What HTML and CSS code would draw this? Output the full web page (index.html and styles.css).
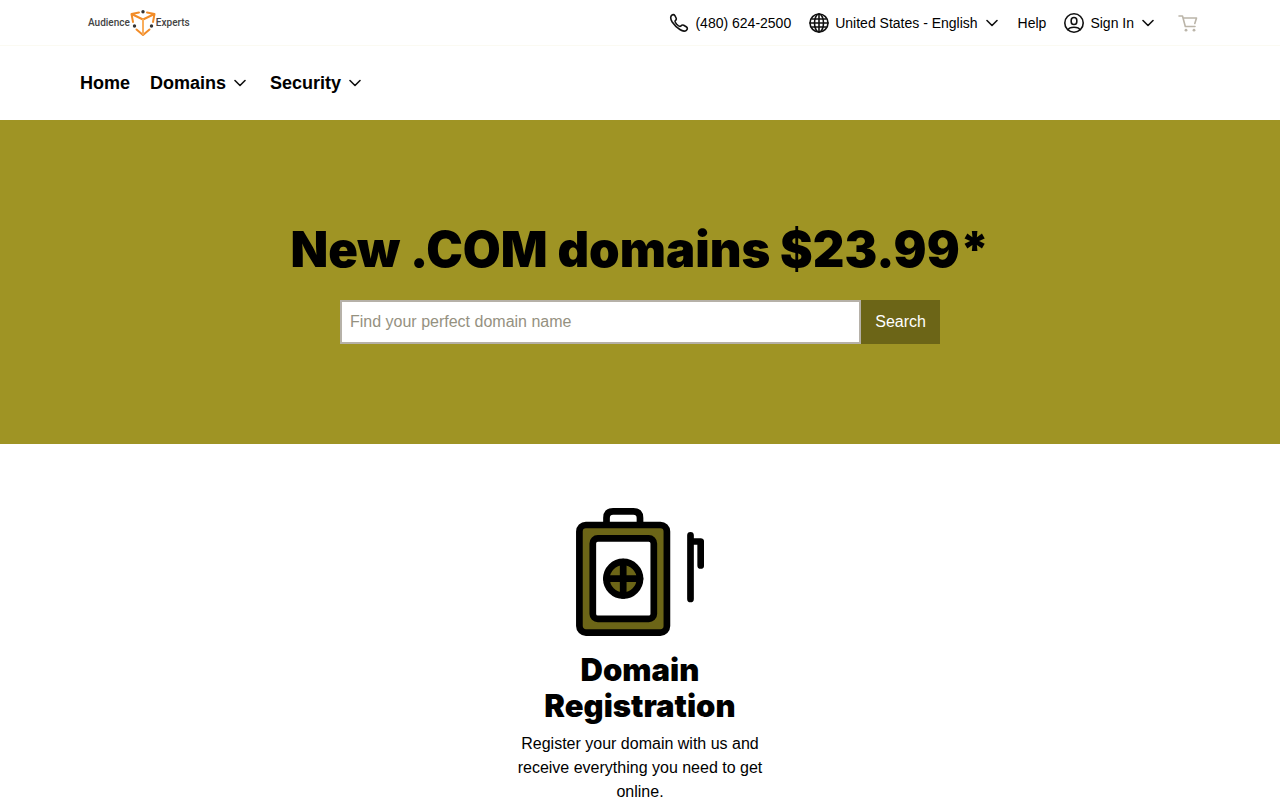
FILE: index.html
```html
<!DOCTYPE html>
<html lang="en">
<head>
<meta charset="utf-8">
<meta name="viewport" content="width=device-width, initial-scale=1">
<title>Audience Experts</title>
<link rel="stylesheet" href="styles.css">
</head>
<body>
<header>
  <div class="topbar">
    <a class="logo" href="#" aria-label="Audience Experts">
      <span>Audience</span>
      <svg class="logo-mark" viewBox="0 0 26 28" aria-hidden="true">
        <g fill="none" stroke="#f28c28" stroke-width="2" stroke-linejoin="round" stroke-linecap="round">
          <path d="M9 3.500 1.500 5 13 10.500 24.500 5 17 3.500M1.500 5 3 13M24.500 5 23 13M6.500 20.500 13 26 19.500 20.500"/>
          <path stroke="#f9ad5c" d="M13 10.500V25"/>
        </g>
        <g fill="#333"><circle cx="13" cy="2.700" r="1.700"/><circle cx="4.500" cy="17" r="1.700"/><circle cx="21.500" cy="17" r="1.700"/></g>
      </svg>
      <span>Experts</span>
    </a>
    <nav class="utility" aria-label="Utility">
      <a class="item" href="tel:4806242500">
        <svg class="icon" viewBox="0 0 20 20" aria-hidden="true"><path d="M2.300 2.800C3.200 1.400 5 1.200 5.900 2.700L7.100 5c.7 1.400 0 2-.9 2.800-.6.700 0 1.700 1.500 3.400 1.700 1.800 3.200 2.600 4 1.900.9-.9 1.700-1.500 3-.8l2.500 1.500c1.600 1 1.400 2.600.2 3.500-1.600 1.300-3.900 1-6.500-.8A26 26 0 0 1 3.200 9C1.500 6.300 1.200 4.500 2.300 2.800Z"/></svg>
        <span>(480) 624-2500</span>
      </a>
      <button class="item" type="button">
        <svg class="icon globe" viewBox="0 0 20 20" aria-hidden="true"><circle cx="10" cy="10" r="9"/><ellipse cx="10" cy="10" rx="4.500" ry="9"/><path d="M10 1v18M1 10h18M3 6h14M3 14h14"/></svg>
        <span>United States - English</span>
        <svg class="chevron" viewBox="0 0 12 12" aria-hidden="true"><path d="m1 3.500 5 5 5-5"/></svg>
      </button>
      <a class="item" href="#">Help</a>
      <button class="item" type="button">
        <svg class="icon" viewBox="0 0 20 20" aria-hidden="true"><circle cx="10" cy="10" r="9.200"/><rect x="7.200" y="4.500" width="5.600" height="7" rx="2.800"/><path d="M4 16.800C5.500 13.300 14.500 13.300 16 16.800"/></svg>
        <span>Sign In</span>
        <svg class="chevron" viewBox="0 0 12 12" aria-hidden="true"><path d="m1 3.500 5 5 5-5"/></svg>
      </button>
      <a class="item cart" href="#" aria-label="Cart">
        <svg class="icon" viewBox="0 0 20 20" aria-hidden="true"><path d="M1 3h3.500L7.300 13.500h9.700M5 5h13.500L16.800 10.500"/><circle class="wheel" cx="8" cy="17.200" r="1.400"/><circle class="wheel" cx="16" cy="17.200" r="1.400"/></svg>
      </a>
    </nav>
  </div>
  <nav class="mainnav" aria-label="Main">
    <a href="#">Home</a>
    <button type="button">Domains <svg class="chevron" viewBox="0 0 12 12" aria-hidden="true"><path d="m1 3.500 5 5 5-5"/></svg></button>
    <button type="button">Security <svg class="chevron" viewBox="0 0 12 12" aria-hidden="true"><path d="m1 3.500 5 5 5-5"/></svg></button>
  </nav>
</header>
<main>
  <section class="hero">
    <h1>New .COM domains $23.99*</h1>
    <form class="search">
      <input type="text" placeholder="Find your perfect domain name" aria-label="Find your perfect domain name">
      <button type="submit">Search</button>
    </form>
  </section>
  <section class="feature">
    <svg class="feature-icon" viewBox="0 0 128 128" aria-hidden="true">
      <g stroke="#000" stroke-width="6.700" fill="none" stroke-linecap="round" stroke-linejoin="round">
        <path stroke-linecap="butt" d="M30.500 16v-6q0-6.600 6.600-6.600h20.300q6.600 0 6.600 6.600v6"/>
        <rect x="3.400" y="17" width="87.500" height="107.600" rx="6.500" fill="#6c6517"/>
        <rect x="16.800" y="30.400" width="61" height="80.500" rx="5" fill="#fff"/>
        <circle cx="47.200" cy="70.700" r="16.800" fill="#6c6517"/>
        <path d="M47.200 54v33.500M30.500 70.700H64M114.500 27.300V91M114.500 33.500h10.200v24"/>
      </g>
    </svg>
    <h2>Domain Registration</h2>
    <p>Register your domain with us and receive everything you need to get online.</p>
  </section>
</main>
</body>
</html>
```

FILE: styles.css
```css
* { box-sizing: border-box; }
body {
  margin: 0;
  background: #fff;
  color: #000;
  font: 16px/24px "Liberation Sans", Arial, sans-serif;
}
a, button {
  color: inherit;
  font: inherit;
  text-decoration: none;
}
button {
  padding: 0;
  border: 0;
  background: none;
  cursor: pointer;
}
h1, h2, p { margin: 0; }
h1, h2 { font-family: "Arial Black", Inter, sans-serif; font-weight: 900; }

.topbar {
  display: flex;
  align-items: center;
  justify-content: space-between;
  min-height: 46px;
  padding: 0 80px 0 88px;
  border-bottom: 1px solid #fbfaf2;
}
.logo {
  display: flex;
  align-items: center;
  color: #444;
  font: 500 10px/20px Roboto, "Liberation Sans", sans-serif;
}
.logo-mark { width: 26px; height: 28px; }
.utility {
  display: flex;
  align-items: center;
  gap: 18px;
  font-size: 14px;
}
.item { display: flex; align-items: center; gap: 6px; }
.icon, .chevron {
  flex: none;
  fill: none;
  stroke: #111;
  stroke-width: 1.6;
  stroke-linecap: round;
  stroke-linejoin: round;
}
.icon { width: 20px; height: 20px; }
.chevron { width: 12px; height: 12px; margin: 0 2px; }
.cart { padding: 0 2px 0 4px; }
.cart .icon { stroke: #bbb5a9; }
.cart .wheel { fill: #bbb5a9; stroke: none; }

.mainnav {
  display: flex;
  align-items: center;
  gap: 20px;
  min-height: 74px;
  padding: 0 80px;
  font-size: 18px;
  font-weight: bold;
}
.mainnav button { display: flex; align-items: center; gap: 6px; }
.mainnav .chevron { margin-right: 4px; }

.hero {
  padding: 100px 20px;
  background: #9f9424;
  text-align: center;
}
.hero h1 { margin-bottom: 20px; font-size: 49px; line-height: 60px; }
.search {
  display: flex;
  max-width: 600px;
  margin: 0 auto;
}
.search input {
  flex: 1;
  min-width: 0;
  height: 44px;
  padding: 0 8px;
  border: 2px solid #b6b1a8;
  border-radius: 0;
  background: #fff;
  font: inherit;
}
.search input::placeholder { color: #95917f; }
.search button {
  padding: 0 14px;
  background: #6c6517;
  color: #fff;
}

.feature {
  max-width: 260px;
  margin: 0 auto;
  padding: 64px 0;
  text-align: center;
}
.feature-icon { display: block; width: 128px; height: 128px; margin: 0 auto 16px; }
.feature h2 { margin-bottom: 8px; font-size: 31px; line-height: 36px; }
```
